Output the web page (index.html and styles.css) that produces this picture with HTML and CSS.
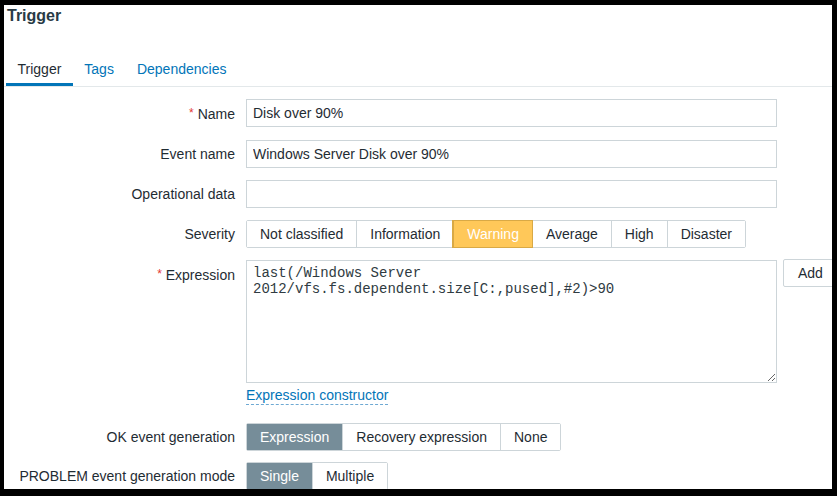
FILE: index.html
```html
<!DOCTYPE html>
<html>
<head>
<meta charset="utf-8">
<title>Trigger</title>
<link rel="stylesheet" href="styles.css">
</head>
<body>
<div class="screen">
  <h1 class="title">Trigger</h1>
  <ul class="tabs">
    <li class="tab active">Trigger</li>
    <li class="tab">Tags</li>
    <li class="tab">Dependencies</li>
  </ul>
  <div class="form">
    <div class="row">
      <div class="lbl"><span class="req">*</span> Name</div>
      <div class="field"><input class="text" type="text" value="Disk over 90%"></div>
    </div>
    <div class="row">
      <div class="lbl">Event name</div>
      <div class="field"><input class="text" type="text" value="Windows Server Disk over 90%"></div>
    </div>
    <div class="row">
      <div class="lbl">Operational data</div>
      <div class="field"><input class="text" type="text" value=""></div>
    </div>
    <div class="row">
      <div class="lbl">Severity</div>
      <div class="field">
        <div class="seg">
          <span class="opt">Not classified</span>
          <span class="opt">Information</span>
          <span class="opt warning">Warning</span>
          <span class="opt">Average</span>
          <span class="opt">High</span>
          <span class="opt">Disaster</span>
        </div>
      </div>
    </div>
    <div class="row row-expr">
      <div class="lbl"><span class="req">*</span> Expression</div>
      <div class="field field-expr">
        <textarea class="expr" readonly>last(/Windows Server 2012/vfs.fs.dependent.size[C:,pused],#2)&gt;90</textarea>
        <button class="btn" type="button">Add</button>
      </div>
    </div>
    <div class="row row-link">
      <div class="lbl"></div>
      <div class="field"><a class="link">Expression constructor</a></div>
    </div>
    <div class="row row-ok">
      <div class="lbl">OK event generation</div>
      <div class="field">
        <div class="seg">
          <span class="opt on">Expression</span>
          <span class="opt">Recovery expression</span>
          <span class="opt">None</span>
        </div>
      </div>
    </div>
    <div class="row">
      <div class="lbl">PROBLEM event generation mode</div>
      <div class="field">
        <div class="seg">
          <span class="opt on">Single</span>
          <span class="opt">Multiple</span>
        </div>
      </div>
    </div>
  </div>
</div>
</body>
</html>
```

FILE: styles.css
```css
* {
  box-sizing: border-box;
}

html,
body {
  margin: 0;
}

body {
  background: #000;
  padding: 5px 5px 0 4px;
  width: 837px;
  height: 496px;
  overflow: hidden;
  font-family: "Liberation Sans", Arial, sans-serif;
  font-size: 14px;
  color: #1f2c33;
}

.screen {
  background: #fff;
  height: 484px;
  overflow: hidden;
}

.title {
  margin: 0;
  padding: 1px 0 0 3px;
  font-size: 16px;
  line-height: 20px;
  font-weight: bold;
  color: #283a45;
}

.tabs {
  list-style: none;
  margin: 35px 0 0;
  padding: 0 0 0 2px;
  display: flex;
  border-bottom: 1px solid #e3e8ea;
}

.tab {
  padding: 0 11.5px 5px;
  line-height: 17px;
  border-bottom: 3px solid transparent;
  color: #0275b8;
}

.tab.active {
  color: #1f2c33;
  border-bottom-color: #0275b8;
}

.form {
  margin-top: 12px;
}

.row {
  display: grid;
  grid-template-columns: 231px 1fr;
  column-gap: 11px;
  margin-bottom: 12px;
}

.lbl {
  text-align: right;
  line-height: 28px;
  white-space: nowrap;
  color: #1f2c33;
}

.req {
  color: #e33734;
  font-size: 12px;
  vertical-align: 2px;
}

.field {
  display: flex;
  align-items: flex-start;
  min-width: 0;
}

.text {
  width: 531px;
  height: 28px;
  margin: 0;
  border: 1px solid #cdd5d9;
  border-radius: 0;
  padding: 0 6px;
  font-family: inherit;
  font-size: 14px;
  color: #1f2c33;
  background: #fff;
  outline: none;
}

.seg {
  display: inline-flex;
  border: 1px solid #cdd5d9;
  border-radius: 2px;
  height: 28px;
}

.opt {
  padding: 0 13px;
  line-height: 26px;
  border-left: 1px solid #cdd5d9;
  white-space: nowrap;
  color: #1f2c33;
  background: #fff;
}

.opt:first-child {
  border-left: 0;
}

.opt.warning {
  position: relative;
  background: #ffc859;
  color: #fff;
  border-left-color: #d9a945;
  box-shadow: 0 0 0 1px #d9a945;
}

.opt.on {
  background: #768d99;
  color: #fff;
  border-left-color: #768d99;
}

.row-expr {
  margin-bottom: 4px;
}

.field-expr {
  gap: 6px;
}

.expr {
  flex: 0 0 531px;
  width: 531px;
  height: 123px;
  margin: 0;
  border: 1px solid #cdd5d9;
  border-radius: 0;
  padding: 4px 6px;
  font-family: "Liberation Mono", "Courier New", monospace;
  font-size: 14px;
  line-height: 16px;
  color: #2f3b42;
  background: #fff;
  outline: none;
  overflow: hidden;
}

.btn {
  flex: 0 0 auto;
  height: 28px;
  margin: -1px 0 0;
  padding: 0 14px;
  border: 1px solid #cdd5d9;
  border-radius: 2px;
  background: #fff;
  font-family: inherit;
  font-size: 14px;
  color: #1f2c33;
}

.row-link {
  height: 24px;
}

.row-link .field {
  line-height: 17px;
}

.link {
  color: #0275b8;
  border-bottom: 1px dashed #6ea9d3;
  cursor: pointer;
}

.row-ok {
  margin-bottom: 11px;
}
```
